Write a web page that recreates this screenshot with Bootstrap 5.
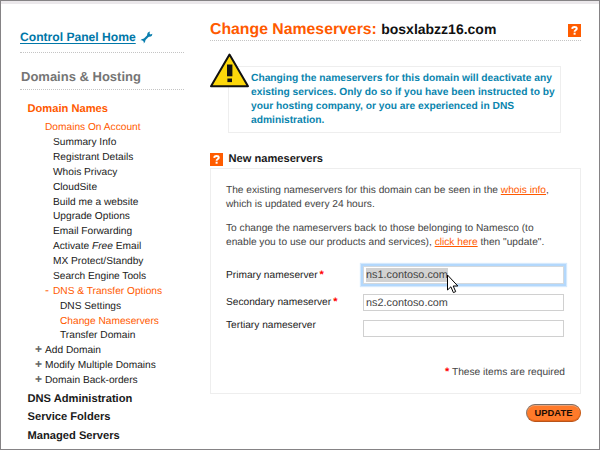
<!DOCTYPE html>
<html lang="en">
<head>
<meta charset="utf-8">
<meta name="viewport" content="width=device-width, initial-scale=1">
<title>Change Nameservers</title>
<link href="https://cdn.jsdelivr.net/npm/bootstrap@5.3.0/dist/css/bootstrap.min.css" rel="stylesheet">
<style>
body{font-family:"Liberation Sans",Arial,sans-serif;font-size:10.18px;color:#1a1a1a;text-rendering:geometricPrecision;background:#fff}
.frame{width:600px;height:450px;border:1px solid #858385;box-shadow:inset 0 3px 0 #ebe8eb}
.side{width:164px;margin-left:19px;padding-top:26px}
.home-link{font-size:12.12px;line-height:20px;height:25px;color:#0077a8;text-underline-offset:2px;text-decoration-thickness:1px}
.home-link:hover{color:#0077a8}
.dots{border-bottom:1px dotted #c4c4c4}
.section-title{font-size:13px;line-height:18px;color:#757575;height:37px;padding:15px 0 0 1px}
.orange,.orange:hover{color:#ff5a00}
.menu-head{font-size:11.15px;line-height:18.6px;padding-left:7.5px}
.menu-first{margin:10px 0 2px}
.menu-row{line-height:14.875px;height:14.875px;white-space:nowrap}
.menu-sub{margin-bottom:.6px}
.menu-last{margin-bottom:.6px}
.lv1{padding-left:25px}.lv2{padding-left:33px}.lv3{padding-left:40px}
.sign{display:inline-block;width:10px;margin-left:-10px;font-size:12px;font-weight:bold;line-height:10px;color:#666}
.lv2 .sign{width:8px;margin-left:-8px;font-weight:normal;color:inherit;font-size:12px}
.main{width:371px;margin-left:26px;padding-top:19px}
.title-row{height:21px;border-bottom:1px dotted #c4c4c4}
.page-title{font-size:15.8px;line-height:19px}
.domain{font-size:14px;color:#111}
.help{width:13px;height:13px;flex:none;display:block}
.warn{width:333px;height:67px;margin:25px 0 0 18px;border:1px solid #eee;padding:5px 0 0 22px;color:#0a85ae;font-size:10.24px;font-weight:bold;line-height:14px;white-space:nowrap}
.warn-icon{left:-20px;top:-15px;width:41px;height:36px}
.sub{font-size:11.12px;height:16px;margin-top:18px}
.sub span{margin-left:5.5px}
.panel{height:226px;margin-top:1px;border:1px solid #eee;padding:15px 15px 0;color:#444}
.panel p{line-height:14px;margin-bottom:10px;white-space:nowrap}
.field{color:#222}
.field label{width:137px;line-height:15px}
.row-primary{margin-top:16px}.row-primary label{padding-top:2px}
.row-secondary{margin-top:10px}.row-secondary label{padding-top:1px}
.row-tertiary{margin-top:9px}.row-tertiary label{line-height:11px}
.note{margin-top:28px}
.req{color:#f00;font-weight:bold;font-size:11px;line-height:8px;margin-left:2px}
.box,.box:focus{height:17px;width:201px;padding:0 2px;border:1px solid #d0d0d0;border-radius:0;font-size:10.84px;line-height:16px;color:#444;background:#fff;box-shadow:none}
.box.active-box{border-color:#d3d9de;box-shadow:0 0 0 2px #b3d8fc,0 0 1px 3px #d5e9fd;height:18px}
.sel{background:#d2d2d2;display:inline-block;line-height:14px;margin-top:1px}
.cursor{left:82px;top:7px;width:14px;height:20px}
.actions{margin-top:10px}
.upd,.upd:hover{width:55px;height:18px;padding:0;font-size:9.4px;font-weight:bold;line-height:16px;border-radius:9px;background:#ff7a2a;color:#1c0d04;border:1px solid;border-color:#77706b #c65a16 #b9541a #8a7a70;box-shadow:inset 0 1px 0 #e9a47b,inset 0 -1px 0 #e8671a}
</style>
</head>
<body>
<div class="frame d-flex overflow-hidden">
  <nav class="side flex-shrink-0">
    <div class="dots d-flex align-items-start">
      <a href="#" class="home-link fw-bold">Control Panel Home</a>
      <svg class="ms-1 mt-1" width="13" height="13" viewBox="0 0 13 13"><path d="M3 10 9.2 3.8" stroke="#0a7eae" stroke-width="2.2"/><path d="M10.2.5 9.4 2.3 10.5 3.5 12.4 2.8Q12.4 5.4 10 5.7L7.8 5.6 7.2 4.8Q6.8 1 10.2.5Z" fill="#0a7eae"/><path d="M.5 9.2Q1.7 7.3 4.1 7.8L5.4 9.1Q5.6 11.5 3.6 12.5L4 10.6 2.6 9.2Z" fill="#0a7eae"/></svg>
    </div>
    <div class="section-title dots fw-bold">Domains &amp; Hosting</div>
    <div class="menu-head menu-first orange fw-bold">Domain Names</div>
    <div class="menu-row menu-sub lv1 orange">Domains On Account</div>
    <div class="menu-row lv2">Summary Info</div>
    <div class="menu-row lv2">Registrant Details</div>
    <div class="menu-row lv2">Whois Privacy</div>
    <div class="menu-row lv2">CloudSite</div>
    <div class="menu-row lv2">Build me a website</div>
    <div class="menu-row lv2">Upgrade Options</div>
    <div class="menu-row lv2">Email Forwarding</div>
    <div class="menu-row lv2">Activate <em>Free</em> Email</div>
    <div class="menu-row lv2">MX Protect/Standby</div>
    <div class="menu-row lv2">Search Engine Tools</div>
    <div class="menu-row lv2 orange"><span class="sign">-</span>DNS &amp; Transfer Options</div>
    <div class="menu-row lv3">DNS Settings</div>
    <div class="menu-row lv3 orange">Change Nameservers</div>
    <div class="menu-row lv3">Transfer Domain</div>
    <div class="menu-row lv1"><span class="sign">+</span>Add Domain</div>
    <div class="menu-row lv1"><span class="sign">+</span>Modify Multiple Domains</div>
    <div class="menu-row menu-last lv1"><span class="sign">+</span>Domain Back-orders</div>
    <div class="menu-head fw-bold">DNS Administration</div>
    <div class="menu-head fw-bold">Service Folders</div>
    <div class="menu-head fw-bold">Managed Servers</div>
  </nav>
  <main class="main flex-shrink-0">
    <div class="title-row d-flex justify-content-between align-items-start">
      <h1 class="page-title fw-bold orange mb-0">Change Nameservers: <span class="domain">bosxlabzz16.com</span></h1>
      <svg class="help mt-1" viewBox="0 0 13 13"><rect width="13" height="13" fill="#ff5c00"/><path d="M4.2 4.9Q4.3 3 6.5 3T8.8 4.6Q8.8 5.6 7.6 6.2 6.6 6.8 6.6 7.7" fill="none" stroke="#fff" stroke-width="1.9"/><rect x="5.6" y="8.7" width="2" height="2" fill="#fff"/></svg>
    </div>
    <div class="warn position-relative">
      <svg class="warn-icon position-absolute" viewBox="0 0 41 36"><path d="M20.5 2.6 39 34.2H2Z" fill="#fcd70b" stroke="#111" stroke-width="2" stroke-linejoin="round"/><path d="M18 12.5h5.4v11.8H18z" fill="#111"/><rect x="18.4" y="26.5" width="4.6" height="3.6" fill="#111"/></svg>
      Changing the nameservers for this domain will deactivate any<br>existing services. Only do so if you have been instructed to by<br>your hosting company, or you are experienced in DNS<br>administration.
    </div>
    <div class="sub d-flex align-items-center fw-bold">
      <svg class="help" viewBox="0 0 13 13"><rect width="13" height="13" fill="#ff5c00"/><path d="M4.2 4.9Q4.3 3 6.5 3T8.8 4.6Q8.8 5.6 7.6 6.2 6.6 6.8 6.6 7.7" fill="none" stroke="#fff" stroke-width="1.9"/><rect x="5.6" y="8.7" width="2" height="2" fill="#fff"/></svg>
      <span>New nameservers</span>
    </div>
    <section class="panel">
      <p>The existing nameservers for this domain can be seen in the <a href="#" class="orange">whois info</a>,<br>which is updated every 24 hours.</p>
      <p class="mb-0">To change the nameservers back to those belonging to Namesco (to<br>enable you to use our products and services), <a href="#" class="orange">click here</a> then "update".</p>
      <div class="field row-primary d-flex"><label>Primary nameserver<span class="req">*</span></label>
        <div class="form-control box active-box position-relative"><span class="sel">ns1.contoso.com</span>
          <svg class="cursor position-absolute" viewBox="0 0 14 20"><path d="M1.5 1v15l3.4-3.2 2.5 5.8 2.3-1-2.5-5.6h4.6Z" fill="#fff" stroke="#000"/></svg></div></div>
      <div class="field row-secondary d-flex"><label>Secondary nameserver<span class="req">*</span></label><div class="form-control box">ns2.contoso.com</div></div>
      <div class="field row-tertiary d-flex"><label>Tertiary nameserver</label><div class="form-control box"></div></div>
      <div class="note text-end"><span class="req">*</span> These items are required</div>
    </section>
    <div class="actions d-flex justify-content-end"><button class="btn upd">UPDATE</button></div>
  </main>
</div>
<script src="https://cdn.jsdelivr.net/npm/bootstrap@5.3.0/dist/js/bootstrap.bundle.min.js"></script>
</body>
</html>
